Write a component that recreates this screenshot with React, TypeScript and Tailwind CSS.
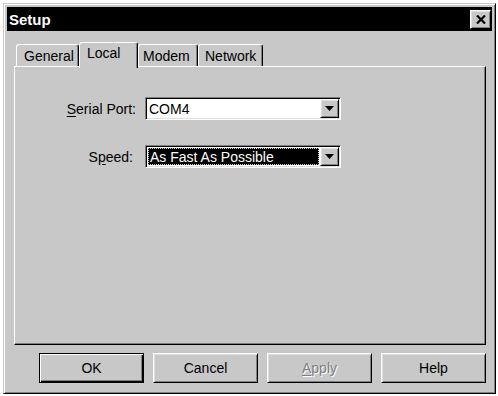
import React from "react";

const raised =
  "border border-t-white border-l-white border-r-black border-b-black shadow-[inset_1px_1px_#dfdfdf,inset_-1px_-1px_#808080]";
const sunken =
  "border border-t-[#808080] border-l-[#808080] border-r-white border-b-white shadow-[inset_1px_1px_#000,inset_-1px_-1px_#dfdfdf]";

function Arrow() {
  return (
    <svg width="9" height="5" viewBox="0 0 9 5">
      <path d="M0 0h9L4.5 5z" fill="#000" />
    </svg>
  );
}

function Combo({ value, focused }: { value: string; focused?: boolean }) {
  return (
    <div className={`flex h-[23px] w-[196px] p-[1px] ${sunken}`}>
      <div className="flex flex-1 items-center bg-white p-[1px]">
        {focused ? (
          <div className="flex h-full flex-1 items-center border border-dotted border-[#c8c8c8] bg-black pl-[1px] text-white">
            {value}
          </div>
        ) : (
          <div className="pl-[1px]">{value}</div>
        )}
      </div>
      <div className={`flex w-[19px] items-center justify-center bg-[#c8c8c8] ${raised}`}>
        <Arrow />
      </div>
    </div>
  );
}

function Tab({ label, width, pl, active }: { label: string; width: number; pl: number; active?: boolean }) {
  const base =
    "flex items-start rounded-t-[3px] border-l border-t border-r border-l-white border-t-white border-r-black bg-[#c8c8c8] shadow-[inset_-1px_0_#808080]";
  return (
    <div
      className={
        active
          ? `${base} relative z-10 -mb-[2px] h-[26px] pt-[3px]`
          : `${base} h-[22px] pt-[4px]`
      }
      style={{ width, paddingLeft: pl }}
    >
      {label}
    </div>
  );
}

function Button({ children, def, disabled }: { children: React.ReactNode; def?: boolean; disabled?: boolean }) {
  const look = def
    ? "border border-black shadow-[inset_1px_1px_#fff,inset_-1px_-1px_#000,inset_-2px_-2px_#808080]"
    : raised;
  return (
    <div
      className={`flex h-[30px] w-[105px] items-center justify-center bg-[#c8c8c8] ${look} ${
        disabled ? "text-[#808080] [text-shadow:1px_1px_0_#fff]" : ""
      }`}
    >
      {children}
    </div>
  );
}

export default function App() {
  return (
    <div className="h-[396px] w-[498px] bg-white pl-[3px] pt-[3px] font-['Liberation_Sans',Arial,sans-serif] text-[14px] leading-none text-black">
      <div className="flex h-[391px] w-[493px] flex-col border border-t-[#c8c8c8] border-l-[#c8c8c8] border-r-black border-b-black bg-[#c8c8c8] p-[3px] shadow-[inset_1px_1px_#fff,inset_-1px_-1px_#808080]">
        <div className="flex h-[24px] items-center justify-between bg-black pl-[2px] pr-[1px]">
          <span className="text-[15px] font-bold text-white">Setup</span>
          <div className={`flex h-[19px] w-[21px] items-center justify-center bg-[#c8c8c8] ${raised}`}>
            <svg width="10" height="9" viewBox="0 0 10 9">
              <path d="M1 0.5l8 8M9 0.5l-8 8" stroke="#000" strokeWidth="2.2" />
            </svg>
          </div>
        </div>

        <div className="ml-[7px] mr-[6px] mt-[11px] flex flex-col">
          <div className="flex h-[24px] items-end pl-[2px]">
            <Tab label="General" width={63} pl={7} />
            <Tab label="Local" width={59} pl={7} active />
            <Tab label="Modem" width={60} pl={4} />
            <Tab label="Network" width={65} pl={6} />
          </div>
          <div className="flex h-[279px] flex-col gap-[25px] border border-t-white border-l-white border-r-black border-b-black pt-[30px] shadow-[inset_-1px_-1px_#808080]">
            <div className="flex items-center">
              <div className="w-[121px] text-right">
                <span className="underline underline-offset-2">S</span>erial Port:
              </div>
              <div className="ml-[9px]">
                <Combo value="COM4" />
              </div>
            </div>
            <div className="flex items-center">
              <div className="w-[121px] pr-[3px] text-right">
                S<span className="underline underline-offset-2">p</span>eed:
              </div>
              <div className="ml-[9px]">
                <Combo value="As Fast As Possible" focused />
              </div>
            </div>
          </div>
          <div className="mt-[8px] flex justify-end gap-[9px]">
            <Button def>OK</Button>
            <Button>Cancel</Button>
            <Button disabled>
              <span>
                <span className="underline underline-offset-2">A</span>pply
              </span>
            </Button>
            <Button>Help</Button>
          </div>
        </div>
      </div>
    </div>
  );
}
